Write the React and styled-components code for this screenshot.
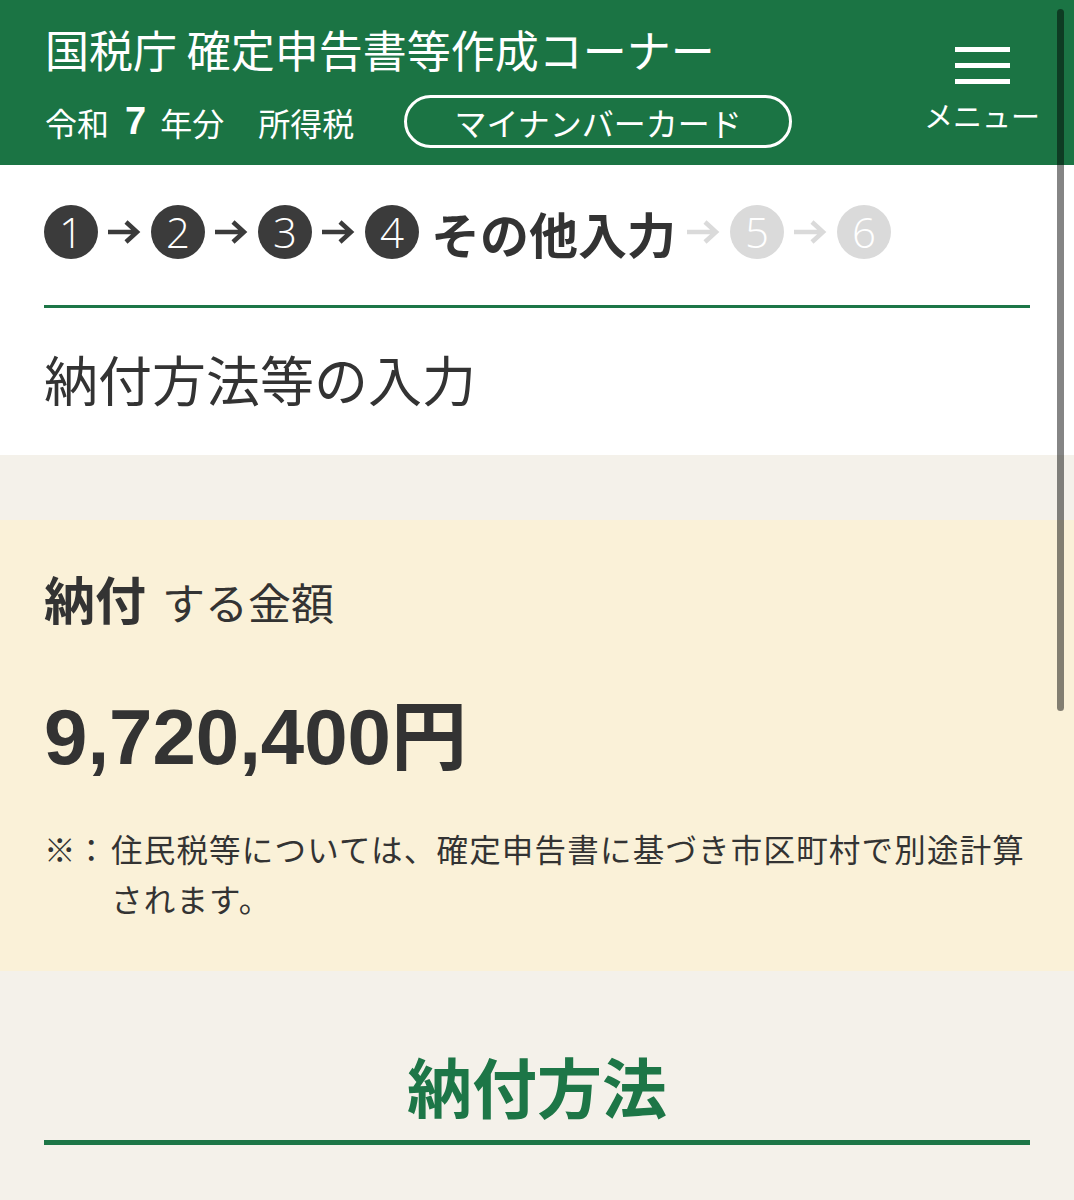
import React from 'react';
import styled, { createGlobalStyle } from 'styled-components';

const Global = createGlobalStyle`
  html, body { margin: 0; padding: 0; }
  body {
    font-family: 'Noto Sans CJK JP', 'Noto Sans', sans-serif;
    color: #333;
    background: #f4f1ea;
  }
`;

const Page = styled.div`
  position: relative;
  width: 1074px;
  min-height: 1200px;
  overflow: hidden;
  background: #f4f1ea;
`;

const Header = styled.header`
  height: 165px;
  background: #1b7444;
  color: #fff;
  display: flex;
  justify-content: space-between;
  box-sizing: border-box;
  padding: 20px 34px 0 45px;
`;

const HeaderLeft = styled.div`
  display: flex;
  flex-direction: column;
  gap: 17px;
`;

const SiteTitle = styled.h1`
  margin: 0;
  font-size: 44px;
  line-height: 58px;
  font-weight: 400;
  white-space: nowrap;
`;

const YearRow = styled.div`
  display: flex;
  align-items: center;
  height: 53px;
  font-size: 32px;
`;

const YearNum = styled.span`
  font-family: 'Liberation Sans', sans-serif;
  font-weight: 700;
  font-size: 38px;
  margin: 0 14px 0 16px;
`;

const TaxName = styled.span`
  margin-left: 34px;
`;

const CardButton = styled.button`
  margin-left: 50px;
  width: 388px;
  height: 53px;
  border: 3px solid #fff;
  border-radius: 27px;
  background: transparent;
  color: #fff;
  font-family: inherit;
  font-size: 32px;
  line-height: 1;
  padding: 0;
`;

const MenuButton = styled.div`
  display: flex;
  flex-direction: column;
  align-items: center;
  padding-top: 27px;
  width: 116px;
`;

const Bar = styled.span`
  display: block;
  width: 55px;
  height: 5px;
  background: #fff;
  margin-bottom: 11px;
`;

const MenuLabel = styled.span`
  margin-top: 2px;
  font-size: 29px;
  line-height: 36px;
  white-space: nowrap;
`;

const WhitePanel = styled.section`
  background: #fff;
  padding: 40px 44px 38px;
`;

const Steps = styled.div`
  display: flex;
  align-items: center;
  height: 54px;
`;

const Circle = styled.span`
  flex: none;
  width: 54px;
  height: 54px;
  border-radius: 50%;
  background: ${p => (p.$done ? '#3b3b3b' : '#dadada')};
  color: #fff;
  display: flex;
  align-items: center;
  justify-content: center;
  font-family: 'Open Sans', 'Liberation Sans', sans-serif;
  font-weight: 300;
  font-size: 42px;
  line-height: 1;
`;

const ArrowWrap = styled.span`
  display: flex;
  margin: 0 10px 0 8px;
  color: ${p => (p.$done ? '#3b3b3b' : '#dadada')};
`;

const StepName = styled.span`
  font-size: 49px;
  font-weight: 700;
  margin: 0 1px 0 12px;
  white-space: nowrap;
  color: #333;
`;

const Rule = styled.hr`
  margin: ${p => p.$mt || 0}px 0 0;
  border: 0;
  height: ${p => p.$h || 3}px;
  background: #1d7647;
`;

const PageTitle = styled.h2`
  margin: 33px 0 0;
  font-size: 54px;
  line-height: 76px;
  font-weight: 400;
  color: #333;
`;

const Spacer = styled.div`
  height: 65px;
  background: #f4f1ea;
`;

const AmountPanel = styled.section`
  background: #faf1d8;
  padding: 48px 44px 48px;
`;

const AmountLabel = styled.div`
  font-size: 43px;
  line-height: 60px;
  strong {
    font-size: 51px;
    line-height: 60px;
    font-weight: 700;
    margin-right: 16px;
  }
`;

const Amount = styled.div`
  margin-top: 55px;
  font-size: 76px;
  line-height: 90px;
  font-weight: 700;
  color: #333;
  span.num {
    font-family: 'Liberation Sans', sans-serif;
    font-weight: 700;
    font-size: 78px;
  }
`;

const Note = styled.div`
  display: flex;
  margin-top: 41px;
  font-size: 31.5px;
  line-height: 50px;
  letter-spacing: 1.2px;
`;

const NoteMark = styled.span`
  flex: none;
  width: 67px;
  white-space: nowrap;
  letter-spacing: 0;
`;

const NoteBody = styled.span`
  flex: 1;
`;

const MethodSection = styled.section`
  padding: 69px 44px 0;
`;

const MethodTitle = styled.h2`
  margin: 0;
  text-align: center;
  font-size: 65px;
  line-height: 90px;
  font-weight: 700;
  color: #1d7647;
`;

const ScrollThumb = styled.div`
  position: absolute;
  top: 9px;
  left: 1057px;
  width: 7px;
  height: 702px;
  border-radius: 4px;
  background: rgba(0, 0, 0, 0.48);
`;

const Arrow = ({ done }) => (
  <ArrowWrap $done={done}>
    <svg width="35" height="26" viewBox="0 0 35 26">
      <path d="M2 13 H31 M20 3 L31 13 L20 23" fill="none" stroke="currentColor" strokeWidth="4.5" />
    </svg>
  </ArrowWrap>
);

export default function App() {
  return (
    <Page>
      <Global />
      <Header>
        <HeaderLeft>
          <SiteTitle>国税庁 確定申告書等作成コーナー</SiteTitle>
          <YearRow>
            令和<YearNum>7</YearNum>年分<TaxName>所得税</TaxName>
            <CardButton>マイナンバーカード</CardButton>
          </YearRow>
        </HeaderLeft>
        <MenuButton>
          <Bar />
          <Bar />
          <Bar />
          <MenuLabel>メニュー</MenuLabel>
        </MenuButton>
      </Header>

      <WhitePanel>
        <Steps>
          <Circle $done>1</Circle>
          <Arrow done />
          <Circle $done>2</Circle>
          <Arrow done />
          <Circle $done>3</Circle>
          <Arrow done />
          <Circle $done>4</Circle>
          <StepName>その他入力</StepName>
          <Arrow />
          <Circle>5</Circle>
          <Arrow />
          <Circle>6</Circle>
        </Steps>
        <Rule $mt={46} $h={3} />
        <PageTitle>納付方法等の入力</PageTitle>
      </WhitePanel>

      <Spacer />

      <AmountPanel>
        <AmountLabel>
          <strong>納付</strong>する金額
        </AmountLabel>
        <Amount>
          <span className="num">9,720,400</span>円
        </Amount>
        <Note>
          <NoteMark>※：</NoteMark>
          <NoteBody>
            住民税等については、確定申告書に基づき市区町村で別途計算
            <br />
            されます。
          </NoteBody>
        </Note>
      </AmountPanel>

      <MethodSection>
        <MethodTitle>納付方法</MethodTitle>
        <Rule $mt={10} $h={5} />
      </MethodSection>

      <ScrollThumb />
    </Page>
  );
}
